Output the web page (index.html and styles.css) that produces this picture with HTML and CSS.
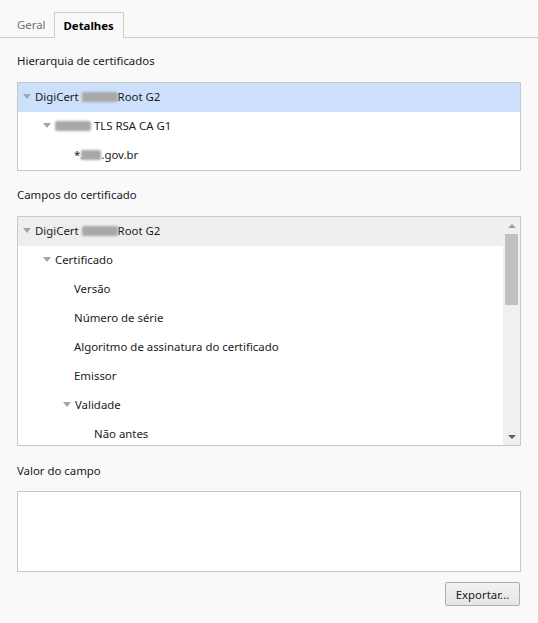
FILE: index.html
```html
<!DOCTYPE html>
<html>
<head>
<meta charset="utf-8">
<link rel="stylesheet" href="styles.css">
</head>
<body>
<div class="tabs">
  <div class="tab">Geral</div>
  <div class="tab active">Detalhes</div>
</div>
<div class="content">
  <div class="label l1">Hierarquia de certificados</div>
  <div class="box hier">
    <div class="row selected lvl0"><span class="tri"></span>DigiCert <span class="blur w36"></span>Root G2</div>
    <div class="row lvl1"><span class="tri"></span><span class="blur w36"></span> TLS RSA CA G1</div>
    <div class="row lvl2">*.<span class="blur w20"></span>.gov.br</div>
  </div>

  <div class="label l2">Campos do certificado</div>
  <div class="box fields">
    <div class="list">
      <div class="row hover lvl0"><span class="tri"></span>DigiCert <span class="blur w36"></span>Root G2</div>
      <div class="row lvl1"><span class="tri"></span>Certificado</div>
      <div class="row lvl2">Versão</div>
      <div class="row lvl2">Número de série</div>
      <div class="row lvl2">Algoritmo de assinatura do certificado</div>
      <div class="row lvl2">Emissor</div>
      <div class="row lvl1b"><span class="tri"></span>Validade</div>
      <div class="row lvl3">Não antes</div>
    </div>
    <div class="scrollbar">
      <div class="arrow up"></div>
      <div class="track"><div class="thumb"></div></div>
      <div class="arrow down"></div>
    </div>
  </div>

  <div class="label l3">Valor do campo</div>
  <div class="box value"></div>

  <div class="actions">
    <button class="btn">Exportar...</button>
  </div>
</div>
</body>
</html>
```

FILE: styles.css
```css
html, body {
  margin: 0;
  padding: 0;
  background: #f9f9f9;
  font-family: "Noto Sans", "Open Sans", sans-serif;
  font-size: 11.4px;
  color: #1a1a1a;
}

.tabs {
  display: flex;
  align-items: flex-end;
  height: 37px;
  border-bottom: 1px solid #cccccc;
  padding-left: 9px;
}

.tab {
  height: 25px;
  line-height: 25px;
  padding: 0 8px;
  color: #707070;
  box-sizing: border-box;
}

.tab.active {
  color: #000;
  font-weight: bold;
  border: 1px solid #cccccc;
  border-bottom: none;
  height: 26px;
  margin-bottom: -1px;
  background: #f9f9f9;
  padding: 0 9px;
}

.content {
  padding: 0 17px;
}

.label {
  height: 20px;
  line-height: 20px;
}
.l1 { margin-top: 13px; margin-bottom: 11px; }
.l2 { margin-top: 14px; margin-bottom: 11px; }
.l3 { margin-top: 15px; margin-bottom: 10px; }

.box {
  border: 1px solid #c8c8c8;
  background: #fff;
}

.hier {
  height: 87px;
}

.row {
  height: 29px;
  line-height: 28px;
  white-space: nowrap;
}

.row.selected { background: #cce0fb; }
.row.hover { background: #eeeeee; }

.lvl0 { padding-left: 4px; }
.lvl1 { padding-left: 24px; }
.lvl1b { padding-left: 44px; }
.lvl2 { padding-left: 56px; }
.lvl3 { padding-left: 76px; }

.tri {
  display: inline-block;
  vertical-align: middle;
  width: 0;
  height: 0;
  border-left: 4px solid transparent;
  border-right: 4px solid transparent;
  border-top: 5px solid #a4a4a4;
  margin-right: 4px;
  margin-left: 1px;
  position: relative;
  top: -1px;
}

.blur {
  display: inline-block;
  vertical-align: middle;
  height: 10px;
  background: #a8a8a8;
  border-radius: 2px;
  filter: blur(0.8px);
  position: relative;
  top: -1px;
}
.w36 { width: 36px; }
.w20 { width: 20px; margin-left: -2px; }

.fields {
  height: 228px;
  display: flex;
  overflow: hidden;
}

.list {
  flex: 1;
  overflow: hidden;
}

.scrollbar {
  width: 17px;
  background: #f0f0f0;
  display: flex;
  flex-direction: column;
}

.arrow {
  height: 17px;
  display: flex;
  align-items: center;
  justify-content: center;
}
.arrow.up::after {
  content: "";
  border-left: 4px solid transparent;
  border-right: 4px solid transparent;
  border-bottom: 4px solid #a0a0a0;
}
.arrow.down::after {
  content: "";
  border-left: 4px solid transparent;
  border-right: 4px solid transparent;
  border-top: 4px solid #606060;
}

.track {
  flex: 1;
  display: flex;
  justify-content: center;
}

.thumb {
  width: 13px;
  height: 71px;
  background: #c0c0c0;
}

.value {
  height: 79px;
}

.actions {
  display: flex;
  justify-content: flex-end;
  margin-top: 10px;
  padding-right: 1px;
}

.btn {
  font-family: inherit;
  font-size: 11.4px;
  color: #1a1a1a;
  width: 75px;
  height: 24px;
  border: 1px solid #adadad;
  border-radius: 2px;
  background: linear-gradient(#f2f2f2, #e6e6e6);
  padding: 0;
}
```
